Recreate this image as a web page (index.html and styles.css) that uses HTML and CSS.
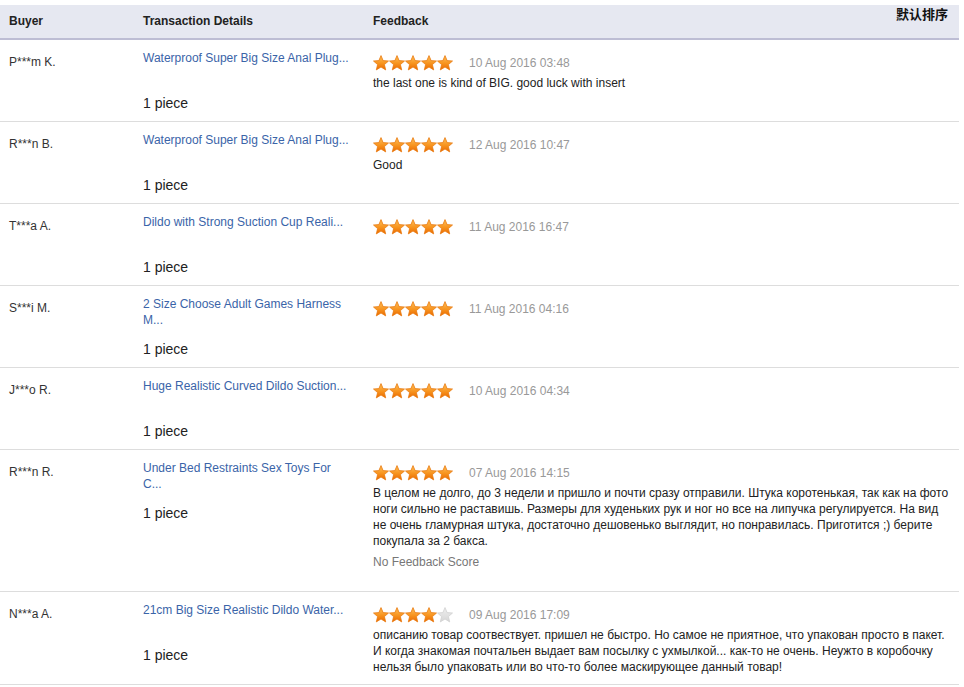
FILE: index.html
```html
<!DOCTYPE html>
<html lang="en">
<head>
    <meta charset="UTF-8">
    <meta name="viewport" content="width=device-width, initial-scale=1.0">
    <link rel="stylesheet" href="styles.css">
</head>
<body>
    <svg width="0" height="0" style="position: absolute;">
        <defs>
            <linearGradient id="starFill" x1="0" y1="0" x2="0" y2="1">
                <stop offset="0" stop-color="#ffc15a"/>
                <stop offset="0.55" stop-color="#f7931e"/>
                <stop offset="1" stop-color="#ea6a00"/>
            </linearGradient>
            <linearGradient id="starGrey" x1="0" y1="0" x2="0" y2="1">
                <stop offset="0" stop-color="#eeeeee"/>
                <stop offset="1" stop-color="#d6d6d6"/>
            </linearGradient>
            <symbol id="star" viewBox="0 0 16 16">
                <path d="M8 0.6 L10.1 5.6 L15.5 6 L11.4 9.6 L12.7 14.9 L8 12 L3.3 14.9 L4.6 9.6 L0.5 6 L5.9 5.6 Z" stroke-linejoin="round" stroke-width="0.8"/>
            </symbol>
        </defs>
    </svg>

    <div class="feedback-list">
        <div class="list-head">
            <div class="head-cell">Buyer</div>
            <div class="head-cell">Transaction Details</div>
            <div class="head-cell">Feedback</div>
            <div class="sort-label">默认排序</div>
        </div>

        <div class="row">
            <div class="col-buyer">P***m K.</div>
            <div class="col-detail">
                <a class="item-link" href="#">Waterproof Super Big Size Anal Plug...</a>
                <div class="qty">1 piece</div>
            </div>
            <div class="col-feedback">
                <div class="rating">
                    <span class="stars">
                        <svg class="star on"><use href="#star"/></svg><svg class="star on"><use href="#star"/></svg><svg class="star on"><use href="#star"/></svg><svg class="star on"><use href="#star"/></svg><svg class="star on"><use href="#star"/></svg>
                    </span>
                    <span class="date">10 Aug 2016 03:48</span>
                </div>
                <p class="comment">the last one is kind of BIG. good luck with insert</p>
            </div>
        </div>

        <div class="row">
            <div class="col-buyer">R***n B.</div>
            <div class="col-detail">
                <a class="item-link" href="#">Waterproof Super Big Size Anal Plug...</a>
                <div class="qty">1 piece</div>
            </div>
            <div class="col-feedback">
                <div class="rating">
                    <span class="stars">
                        <svg class="star on"><use href="#star"/></svg><svg class="star on"><use href="#star"/></svg><svg class="star on"><use href="#star"/></svg><svg class="star on"><use href="#star"/></svg><svg class="star on"><use href="#star"/></svg>
                    </span>
                    <span class="date">12 Aug 2016 10:47</span>
                </div>
                <p class="comment">Good</p>
            </div>
        </div>

        <div class="row">
            <div class="col-buyer">T***a A.</div>
            <div class="col-detail">
                <a class="item-link" href="#">Dildo with Strong Suction Cup Reali...</a>
                <div class="qty">1 piece</div>
            </div>
            <div class="col-feedback">
                <div class="rating">
                    <span class="stars">
                        <svg class="star on"><use href="#star"/></svg><svg class="star on"><use href="#star"/></svg><svg class="star on"><use href="#star"/></svg><svg class="star on"><use href="#star"/></svg><svg class="star on"><use href="#star"/></svg>
                    </span>
                    <span class="date">11 Aug 2016 16:47</span>
                </div>
            </div>
        </div>

        <div class="row">
            <div class="col-buyer">S***i M.</div>
            <div class="col-detail">
                <a class="item-link" href="#">2 Size Choose Adult Games Harness M...</a>
                <div class="qty">1 piece</div>
            </div>
            <div class="col-feedback">
                <div class="rating">
                    <span class="stars">
                        <svg class="star on"><use href="#star"/></svg><svg class="star on"><use href="#star"/></svg><svg class="star on"><use href="#star"/></svg><svg class="star on"><use href="#star"/></svg><svg class="star on"><use href="#star"/></svg>
                    </span>
                    <span class="date">11 Aug 2016 04:16</span>
                </div>
            </div>
        </div>

        <div class="row">
            <div class="col-buyer">J***o R.</div>
            <div class="col-detail">
                <a class="item-link" href="#">Huge Realistic Curved Dildo Suction...</a>
                <div class="qty">1 piece</div>
            </div>
            <div class="col-feedback">
                <div class="rating">
                    <span class="stars">
                        <svg class="star on"><use href="#star"/></svg><svg class="star on"><use href="#star"/></svg><svg class="star on"><use href="#star"/></svg><svg class="star on"><use href="#star"/></svg><svg class="star on"><use href="#star"/></svg>
                    </span>
                    <span class="date">10 Aug 2016 04:34</span>
                </div>
            </div>
        </div>

        <div class="row">
            <div class="col-buyer">R***n R.</div>
            <div class="col-detail">
                <a class="item-link" href="#">Under Bed Restraints Sex Toys For<br>C...</a>
                <div class="qty">1 piece</div>
            </div>
            <div class="col-feedback">
                <div class="rating">
                    <span class="stars">
                        <svg class="star on"><use href="#star"/></svg><svg class="star on"><use href="#star"/></svg><svg class="star on"><use href="#star"/></svg><svg class="star on"><use href="#star"/></svg><svg class="star on"><use href="#star"/></svg>
                    </span>
                    <span class="date">07 Aug 2016 14:15</span>
                </div>
                <p class="comment">В целом не долго, до 3 недели и пришло и почти сразу отправили. Штука коротенькая, так как на фото ноги сильно не раставишь. Размеры для худеньких рук и ног но все на липучка регулируется. На вид не очень гламурная штука, достаточно дешовенько выглядит, но понравилась. Приготится ;) берите покупала за 2 бакса.</p>
                <p class="score">No Feedback Score</p>
            </div>
        </div>

        <div class="row">
            <div class="col-buyer">N***a A.</div>
            <div class="col-detail">
                <a class="item-link" href="#">21cm Big Size Realistic Dildo Water...</a>
                <div class="qty">1 piece</div>
            </div>
            <div class="col-feedback">
                <div class="rating">
                    <span class="stars">
                        <svg class="star on"><use href="#star"/></svg><svg class="star on"><use href="#star"/></svg><svg class="star on"><use href="#star"/></svg><svg class="star on"><use href="#star"/></svg><svg class="star off"><use href="#star"/></svg>
                    </span>
                    <span class="date">09 Aug 2016 17:09</span>
                </div>
                <p class="comment">описанию товар соотвествует. пришел не быстро. Но самое не приятное, что упакован просто в пакет. И когда знакомая почтальен выдает вам посылку с ухмылкой... как-то не очень. Неужто в коробочку нельзя было упаковать или во что-то более маскирующее данный товар!</p>
            </div>
        </div>
    </div>
</body>
</html>
```

FILE: styles.css
```css
body {
    margin: 0;
    background: #ffffff;
    font-family: "Liberation Sans", Arial, "Noto Sans CJK SC", sans-serif;
    font-size: 12px;
    color: #333333;
}

.feedback-list {
    width: 959px;
    padding-top: 5px;
}

/* header bar */
.list-head {
    position: relative;
    display: grid;
    grid-template-columns: 134px 230px 1fr;
    height: 33px;
    background: #e6e8f1;
    border-bottom: 2px solid #bdbdd4;
    font-weight: bold;
    color: #222222;
    line-height: 32px;
}

.head-cell {
    padding-left: 9px;
}

.sort-label {
    position: absolute;
    right: 11px;
    top: 0;
    line-height: 18px;
    font-family: "Noto Sans CJK SC", sans-serif;
    font-size: 13px;
    font-weight: bold;
    color: #111111;
}

/* one feedback entry */
.row {
    display: grid;
    grid-template-columns: 134px 230px 1fr;
    border-bottom: 1px solid #dddddd;
    padding-bottom: 9px;
}

.col-buyer,
.col-detail,
.col-feedback {
    padding-left: 9px;
}

.col-buyer {
    padding-top: 14px;
    line-height: 16px;
}

.col-detail {
    padding-top: 10px;
    padding-right: 9px;
}

.item-link {
    display: block;
    height: 32px;
    line-height: 16px;
    color: #3a64a8;
    text-decoration: none;
}

.qty {
    margin-top: 12px;
    font-size: 14px;
    line-height: 18px;
    color: #222222;
}

.col-feedback {
    padding-top: 13px;
    padding-right: 8px;
}

.rating {
    display: flex;
    align-items: center;
    height: 20px;
}

.stars {
    display: flex;
}

.star {
    width: 16px;
    height: 16px;
}

.star.on {
    fill: url(#starFill);
    stroke: #e87a10;
}

.star.off {
    fill: url(#starGrey);
    stroke: #d0d0d0;
}

.date {
    margin-left: 16px;
    color: #999999;
}

.comment {
    margin: 2px 0 0;
    line-height: 16px;
    color: #222222;
}

.score {
    margin: 5px 0 12px;
    line-height: 16px;
    color: #777777;
}
```
